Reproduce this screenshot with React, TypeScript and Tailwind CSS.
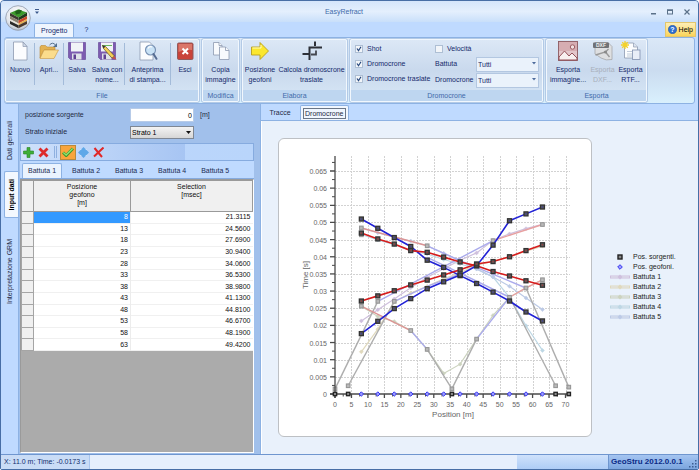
import { type ReactNode, useState } from "react";
import clsx from "clsx";

const READINGS = [
  { position: 8, msec: "21.3115" },
  { position: 13, msec: "24.5600" },
  { position: 18, msec: "27.6900" },
  { position: 23, msec: "30.9400" },
  { position: 28, msec: "34.0600" },
  { position: 33, msec: "36.5300" },
  { position: 38, msec: "38.9800" },
  { position: 43, msec: "41.1300" },
  { position: 48, msec: "44.8100" },
  { position: 53, msec: "46.6700" },
  { position: 58, msec: "48.1900" },
  { position: 63, msec: "49.4200" },
];

const SHOTS = ["Battuta 1", "Battuta 2", "Battuta 3", "Battuta 4", "Battuta 5"];

const GEOPHONES = READINGS.map((r) => r.position);
const SOURCES = [0, 4, 35.5, 67, 71];

type Point = [number, number];

// Times are in milliseconds
const withPositions = (times: number[], from = 0): Point[] =>
  times.map((t, i) => [GEOPHONES[from + i], t]);

const SHOT_SERIES: { color: string; points: Point[] }[] = [
  { color: "#cfc0dd", points: withPositions(READINGS.map((r) => parseFloat(r.msec))) },
  { color: "#e0d9bd", points: withPositions([12.3, 18.9, 26.8, 29.4, 31.4, 33.6, 35.4, 37.5, 38.7, 40, 41.6, 43.1]) },
  { color: "#ccd3bf", points: withPositions([25.6, 22.6, 21.1, 18.5, 13, 6, 8.7, 16, 22.9, 28.2, 30.9, 33.3]) },
  { color: "#bdd7e4", points: withPositions([46.5, 44.9, 43.5, 41.8, 40.8, 39.2, 37.9, 36.5, 34.1, 28.2, 19.9, 12.7]) },
  { color: "#bccae6", points: withPositions([48.4, 47, 45.7, 44.6, 43.2, 41, 38.8, 36.4, 34.1, 31.4, 28, 24.6]) },
];

const FADED_LINES: { color: string; points: Point[] }[] = [
  { color: "#adadad", points: [[0, 1.5], [13, 27]] },
  { color: "#adadad", points: [[4, 2.4], [18, 27]] },
  { color: "#adadad", points: [[28, 13], [35.5, 1.5], [43, 16]] },
  { color: "#adadad", points: [[53, 28.2], [67, 2.4]] },
  { color: "#adadad", points: [[58, 30.9], [71, 2]] },
  { color: "#ababec", points: [[13, 27], [48, 44.7]] },
  { color: "#ababec", points: [[18, 27], [28, 31.4], [38, 35]] },
  { color: "#ababec", points: [[23, 18.5], [28, 13]] },
  { color: "#ababec", points: [[43, 16], [53, 28.2]] },
  { color: "#ababec", points: [[28, 43.2], [38, 38.9], [58, 30.9]] },
  { color: "#ababec", points: [[28, 39.8], [38, 35.2], [53, 28.2]] },
  { color: "#dc9494", points: [[8, 48.4], [28, 43.2]] },
  { color: "#dc9494", points: [[8, 25.6], [23, 18.5]] },
  { color: "#e8a0a0", points: [[48, 44.7], [63, 49.4]] },
  { color: "#e8a0a0", points: [[53, 28.2], [58, 30.9], [63, 33.3]] },
];

const FADED_MARKS: Point[] = [
  [0, 1.5], [4, 2.4], [8, 25.6], [8, 48.4], [8, 46.4], [13, 27], [18, 27], [23, 18.5], [28, 43.2],
  [28, 13], [35.5, 1.5], [43, 16], [48, 44.7], [53, 28.2], [58, 30.9], [63, 33.3], [63, 49.4],
  [67, 2.4], [71, 2],
];

const MAIN_LINES: { color: string; points: Point[] }[] = [
  { color: "#2222d6", points: withPositions([51, 48.3, 45.6, 43, 39, 36.9, 34.5, 32.2, 29.7, 27.1, 23.9, 21.3]) },
  { color: "#2222d6", points: withPositions([17.6, 21.2, 24.9, 27.8, 30.7, 32.7, 34.7, 37.4, 43.4, 50.5, 52.5, 54.5]) },
  { color: "#d61c1c", points: withPositions([46.9, 45.2, 43.7, 41.8, 41.3, 39.9, 38.5, 37.4, 35.7, 34.4, 33, 31.7]) },
  { color: "#d61c1c", points: withPositions([27.1, 28.6, 30.1, 31.8, 33.2, 34.7, 36.2, 37.9, 38.6, 40, 41.8, 43.5]) },
];

const X0 = 56;
const Y0 = 255;
const TOP = 17;
const RIGHT = 291;
const px = (m: number) => X0 + (m * 230.5) / 70;
const py = (ms: number) => Y0 - (ms * 223) / 65;
const toPoints = (points: Point[]) => points.map(([m, t]) => `${px(m)},${py(t)}`).join(" ");

function Chart() {
  const xTicks = Array.from({ length: 15 }, (_, i) => i * 5);
  const yTicks = Array.from({ length: 14 }, (_, i) => i * 5);

  return (
    <svg
      viewBox="0 0 312 297"
      className="block w-full h-auto"
      role="img"
      aria-label="Dromocrone"
      fontFamily="'Liberation Sans', Arial, sans-serif"
      fontSize="7"
      fill="#666666"
    >
      <g stroke="#d2d2d2" strokeWidth="1" strokeDasharray="2 1">
        {xTicks.slice(1).map((m) => (
          <line key={m} x1={Math.round(px(m)) + 0.5} x2={Math.round(px(m)) + 0.5} y1={TOP} y2={Y0} />
        ))}
        {yTicks.slice(1).map((t) => (
          <line key={t} x1={X0} x2={RIGHT} y1={Math.round(py(t)) + 0.5} y2={Math.round(py(t)) + 0.5} />
        ))}
      </g>

      {SHOT_SERIES.map(({ color, points }) => (
        <g key={color} stroke={color} fill="none">
          <polyline points={toPoints(points)} strokeWidth="1.2" />
          {points.map(([m, t]) => (
            <path key={m} d={`M${px(m)} ${py(t) - 2}l2 2l-2 2l-2 -2z`} fill={color} strokeWidth="0.5" />
          ))}
        </g>
      ))}

      {FADED_LINES.map(({ color, points }, i) => (
        <polyline key={i} points={toPoints(points)} stroke={color} strokeWidth="1.4" fill="none" />
      ))}
      {FADED_MARKS.map(([m, t], i) => (
        <rect key={i} x={px(m) - 1.8} y={py(t) - 1.8} width="3.6" height="3.6" fill="#b9b9b9" stroke="#969696" strokeWidth="1.1" />
      ))}

      {MAIN_LINES.map(({ color, points }, i) => (
        <polyline key={i} points={toPoints(points)} stroke={color} strokeWidth="1.6" fill="none" />
      ))}
      {MAIN_LINES.map(({ color, points }, i) => (
        <g key={i}>
          {points.map(([m, t]) => (
            <g key={m}>
              <rect x={px(m) - 2} y={py(t) - 2} width="4" height="4" fill="#5c5c5c" stroke="#333" strokeWidth="1.3" />
              <rect x={px(m) - 0.7} y={py(t) - 0.7} width="1.4" height="1.4" fill={color} opacity="0.5" />
            </g>
          ))}
        </g>
      ))}

      <g stroke="#4a4a4a" strokeWidth="1.3">
        <line x1={X0} x2={X0} y1={TOP} y2={Y0 + 4} />
        <line x1={X0 - 5} x2={RIGHT} y1={Y0} y2={Y0} />
        {xTicks.map((m) => (
          <g key={m}>
            <line x1={px(m)} x2={px(m)} y1={Y0} y2={Y0 + 4} />
            {m < 70 && <line x1={px(m + 2.5)} x2={px(m + 2.5)} y1={Y0} y2={Y0 + 2.5} strokeWidth="1" />}
          </g>
        ))}
        {yTicks.map((t) => (
          <g key={t}>
            <line x1={X0 - 5} x2={X0} y1={py(t)} y2={py(t)} />
            <line x1={X0 - 3} x2={X0} y1={py(t + 2.5)} y2={py(t + 2.5)} strokeWidth="1" />
          </g>
        ))}
      </g>

      {SOURCES.map((m) => (
        <rect key={m} x={px(m) - 1.7} y={Y0 - 1.7} width="3.4" height="3.4" fill="#8a8a8a" stroke="#222" strokeWidth="1.3" />
      ))}
      {GEOPHONES.map((m) => (
        <path key={m} d={`M${px(m)} ${Y0 - 2.2}l2.2 2.2l-2.2 2.2l-2.2 -2.2z`} fill="#9a9aff" stroke="#3535ee" strokeWidth="1" />
      ))}

      {xTicks.map((m) => (
        <text key={m} x={px(m)} y={Y0 + 13} textAnchor="middle">{m}</text>
      ))}
      {yTicks.map((t) => (
        <text key={t} x={X0 - 8} y={py(t) + 3} textAnchor="end">{t / 1000}</text>
      ))}
      <text x="174" y={Y0 + 23} textAnchor="middle" fontSize="8">Position [m]</text>
      <text transform="translate(29 136) rotate(-90)" textAnchor="middle" fontSize="8">Time [s]</text>
    </svg>
  );
}

function Legend() {
  return (
    <ul className="text-[7px] leading-[10px] text-[#222]">
      <li className="flex items-center gap-[3px]">
        <svg width="20" height="8" viewBox="0 0 20 8">
          <rect x="8" y="2" width="4" height="4" fill="#888" stroke="#222" strokeWidth="1.4" />
        </svg>
        Pos. sorgenti.
      </li>
      <li className="flex items-center gap-[3px]">
        <svg width="20" height="8" viewBox="0 0 20 8">
          <path d="M10 1.7l2.3 2.3l-2.3 2.3l-2.3 -2.3z" fill="#9a9aff" stroke="#3535ee" />
        </svg>
        Pos. geofoni.
      </li>
      {SHOTS.map((shot, i) => (
        <li key={shot} className="flex items-center gap-[3px]">
          <svg width="20" height="8" viewBox="0 0 20 8">
            <rect x="0.5" y="3" width="19" height="2" fill="#e4e8f0" stroke={SHOT_SERIES[i].color} strokeWidth="1" />
            <path d="M10 1.5l2.5 2.5l-2.5 2.5l-2.5 -2.5z" fill={SHOT_SERIES[i].color} />
          </svg>
          {shot}
        </li>
      ))}
    </ul>
  );
}

function AppLogo() {
  return (
    <svg width="26" height="26" viewBox="0 0 26 26">
      <defs>
        <radialGradient id="orb" cx="0.5" cy="0.35" r="0.7">
          <stop offset="0" stopColor="#ffffff" />
          <stop offset="0.7" stopColor="#e2e6ec" />
          <stop offset="1" stopColor="#a3abb8" />
        </radialGradient>
      </defs>
      <circle cx="13" cy="13" r="12.3" fill="url(#orb)" stroke="#8f99ab" strokeWidth="0.8" />
      <path d="M5 8l8-3.500l9 3l-8.500 5z" fill="#3c9a2c" />
      <path d="M10 6.500l4-2l3 1l-2 3l-4 1z" fill="#1e5f1a" />
      <path d="M5 8l8.500 4.500v3L5 11z" fill="#39372f" />
      <path d="M22 7.500l-8.500 5v3L22 11z" fill="#1f3a1c" />
      <path d="M5 11l8.500 4.500v3L5 14z" fill="#8b8271" />
      <path d="M22 11l-8.500 4.500v3L22 14z" fill="#c8482a" />
      <path d="M5 14l8.500 4.500v1.800L5 16z" fill="#e7e2d8" />
      <path d="M22 14l-8.500 4.500v1.800L22 16z" fill="#e9b04a" />
      <path d="M5 16l8.500 4.300v3L5 19z" fill="#2b2a28" />
      <path d="M22 16l-8.500 4.300v3L22 19z" fill="#4b3a2e" />
    </svg>
  );
}

function NewIcon() {
  return (
    <svg width="20" height="20" viewBox="0 0 20 20">
      <path d="M3.500 1h9.500l4 4.500v13.500h-13.500z" fill="#fbfcfe" stroke="#8d99b0" strokeWidth="0.8" />
      <path d="M13 1v4.500h4z" fill="#d3dbe8" stroke="#8d99b0" strokeWidth="0.7" />
    </svg>
  );
}

function OpenIcon() {
  return (
    <svg width="20" height="20" viewBox="0 0 20 20">
      <path d="M1 17V6l1-1.500h4.500L8 6h8v3H5z" fill="#e3b252" stroke="#bd8a36" strokeWidth="0.6" />
      <path d="M1 17.500L5 9h14.500L15 17.500z" fill="#fbdc8c" stroke="#c9973f" strokeWidth="0.6" />
      <path d="M10.500 4q3-3.500 6 0" fill="none" stroke="#55718f" strokeWidth="1" />
      <path d="M18 2v4h-4z" fill="#55718f" />
    </svg>
  );
}

function SaveIcon({ edit = false }: { edit?: boolean }) {
  return (
    <svg width="20" height="20" viewBox="0 0 20 20">
      <path d="M1.500 1.500h17v17h-15l-2-2z" fill="#7d5bb0" stroke="#5f3f92" strokeWidth="0.6" />
      <rect x="4" y="1.500" width="12" height="9" fill="#f1f3f7" />
      <rect x="5" y="12.500" width="9.500" height="6" fill="#dfe2e8" />
      <rect x="6.500" y="13.500" width="2.500" height="4.500" fill="#5f3f92" />
      {edit && (
        <>
          <path d="M5 4.500h10" stroke="#67b55e" strokeWidth="1" />
          <path d="M5.500 4.500L8.500 5.500L17.500 15l-2.500 2.200L6.500 7.500z" fill="#f4cf55" stroke="#5c4a2c" strokeWidth="0.7" />
          <path d="M15 17.200l2.500-2.200l2 3.800z" fill="#c4524a" />
          <path d="M5.500 4.500l3 1l-2 2z" fill="#333" />
        </>
      )}
    </svg>
  );
}

function PreviewIcon() {
  return (
    <svg width="20" height="20" viewBox="0 0 20 20">
      <path d="M2 1h9.500l3.500 3.500v14.500H2z" fill="#fbfcfe" stroke="#8d99b0" strokeWidth="0.8" />
      <circle cx="12.500" cy="9" r="5" fill="#c9e2f6" stroke="#7a93b5" strokeWidth="1.200" />
      <path d="M10 7.500q1.500-2.500 4-1.500" stroke="#fff" strokeWidth="1.200" fill="none" />
      <path d="M15.500 13l3 4.800" stroke="#566c92" strokeWidth="2" strokeLinecap="round" />
    </svg>
  );
}

function ExitIcon() {
  return (
    <svg width="20" height="20" viewBox="0 0 20 20">
      <rect x="2.500" y="2" width="15.500" height="16.500" rx="1.200" fill="#c9433a" stroke="#8f5a5c" strokeWidth="1" />
      <path d="M3.500 3h13.500v6q-7-1-13.500 2z" fill="#df8478" opacity="0.8" />
      <path d="M7.500 7.500l5.500 5.500M13 7.500l-5.500 5.500" stroke="#fff" strokeWidth="2" />
    </svg>
  );
}

function CopyIcon() {
  return (
    <svg width="20" height="20" viewBox="0 0 20 20" fill="#f8fafd" stroke="#8d99b0" strokeWidth="0.8">
      <path d="M2.500 1.500h5.500l3 3v9.500h-8.500z" />
      <path d="M8 1.500v3h3" />
      <path d="M8.500 6h6l3.500 3.500v9h-9.500z" />
      <path d="M14.500 6v3.500h3.500" />
    </svg>
  );
}

function ArrowIcon() {
  return (
    <svg width="20" height="20" viewBox="0 0 20 20">
      <path d="M1.500 6h8.500V1.500l8.500 8.500L10 18.500V14H1.500z" fill="#fbe72e" stroke="#b99f1c" strokeWidth="0.9" />
      <path d="M2.500 7h8.500V4" fill="none" stroke="#fffbc0" strokeWidth="1" />
    </svg>
  );
}

function TranslateIcon() {
  return (
    <svg width="22" height="20" viewBox="0 0 22 20" fill="none" stroke="#2d3038" strokeWidth="2">
      <path d="M14 0.500v4.500" />
      <path d="M1.500 13h7.500M8.500 19V6.500h12.500" />
      <path d="M10 13.500h5V9.500" strokeWidth="1.800" stroke="#44474f" />
    </svg>
  );
}

function ImageIcon() {
  return (
    <svg width="20" height="20" viewBox="0 0 20 20">
      <rect x="0.500" y="0.500" width="19" height="19" fill="#e3c6ca" stroke="#8c5a60" strokeWidth="0.9" />
      <path d="M1 1h18v9H1z" fill="#d0a3a8" opacity="0.7" />
      <circle cx="14.500" cy="6" r="2.200" fill="#f1e0e1" stroke="#9c5d62" strokeWidth="1" />
      <path d="M1 16l5.500-6l4.500 5l3-3l5 5v2H1z" fill="#f8f0f0" stroke="#94525a" strokeWidth="1" />
    </svg>
  );
}

function DxfIcon() {
  return (
    <svg width="20" height="20" viewBox="0 0 20 20">
      <path d="M2 1.500h13l4 4v13q-6 1.500-11-1.500q-4-3-6-4z" fill="#dedfe1" stroke="#a4a6aa" strokeWidth="0.8" />
      <path d="M2.500 14l10-3l3-3M12.500 11l4 5" stroke="#999" strokeWidth="1.400" fill="none" />
      <circle cx="12.500" cy="11" r="1.600" fill="#8a8a8a" />
      <rect x="0" y="1.500" width="16" height="5.500" rx="1" fill="#707276" />
      <text x="8" y="6.200" fontSize="5" fontWeight="bold" textAnchor="middle" fill="#f0f0f0">DXF</text>
    </svg>
  );
}

function RtfIcon() {
  return (
    <svg width="20" height="20" viewBox="0 0 20 20">
      <path d="M3.500 2h9l4 4v11h-13z" fill="#fcfdfe" stroke="#8d99b0" strokeWidth="0.8" />
      <path d="M12.500 2v4h4" fill="#dde4ef" stroke="#8d99b0" strokeWidth="0.7" />
      <path d="M6 10.500h5M6 13h5M6 15h5" stroke="#b3bfd2" strokeWidth="0.8" />
      <path d="M4 0v8M0 4h8M1.200 1.200l5.600 5.600M6.800 1.200l-5.600 5.600" stroke="#f4d22c" strokeWidth="1.300" />
      <rect x="11.500" y="9" width="7.500" height="9.500" fill="#e9eef8" stroke="#7f8fae" strokeWidth="0.8" />
    </svg>
  );
}

function RibbonButton({
  icon,
  lines,
  className,
  disabled = false,
}: {
  icon: ReactNode;
  lines: string[];
  className: string;
  disabled?: boolean;
}) {
  return (
    <button
      type="button"
      disabled={disabled}
      className={clsx("flex shrink-0 flex-col items-center whitespace-nowrap", disabled && "text-[#a9b0bb]", className)}
    >
      {icon}
      <span className="mt-1 block">
        {lines.map((line) => (
          <span key={line} className="block">{line}</span>
        ))}
      </span>
    </button>
  );
}

function RibbonGroup({ title, className, children }: { title: string; className: string; children: ReactNode }) {
  return (
    <section
      className={clsx(
        "flex shrink-0 flex-col overflow-hidden rounded-[2px] border border-[#f1f7fd] bg-linear-to-b from-[#dce8f6] via-[#c9d9ed] to-[#d8e7f6] shadow-[0_0_0_1px_#b3cae6]",
        className,
      )}
    >
      <div className="flex flex-1 pt-px">{children}</div>
      <h2 className="h-[11px] bg-[#bed6f0] text-center leading-[11px] text-[#3e6aaa]">{title}</h2>
    </section>
  );
}

const Divider = () => <div className="mt-[2px] h-[42px] w-px shrink-0 bg-[#a3bbd9]" />;

function RibbonCheck({ label, initial }: { label: string; initial: boolean }) {
  const [checked, setChecked] = useState(initial);
  return (
    <label className="flex h-[15px] items-center gap-1 whitespace-nowrap">
      <span className="relative block size-2">
        <input
          type="checkbox"
          checked={checked}
          onChange={(e) => setChecked(e.target.checked)}
          className="block size-2 appearance-none border border-[#aebfd4] bg-[#f2f5f9]"
        />
        {checked && (
          <svg viewBox="0 0 8 8" className="pointer-events-none absolute inset-0 size-2">
            <path d="M2 3.500l1.500 2.200l2.500-4" fill="none" stroke="#26477c" strokeWidth="1.200" />
          </svg>
        )}
      </span>
      {label}
    </label>
  );
}

function RibbonSelect({ id, label }: { id: string; label: string }) {
  return (
    <div className="flex h-4 items-center">
      <label htmlFor={id} className="w-[41px]">{label}</label>
      <div className="relative">
        <select
          id={id}
          className="block h-[15px] w-[63px] appearance-none border border-[#b3c7e1] bg-[#eaf2fb] pl-px leading-[13px] text-[#15296b]"
        >
          <option>Tutti</option>
        </select>
        <svg viewBox="0 0 4 3" className="pointer-events-none absolute right-[3px] top-[5px] h-[3px] w-1">
          <path d="M0 0h4l-2 2.500z" fill="#4d6b9c" />
        </svg>
      </div>
    </div>
  );
}

function TitleBar() {
  return (
    <header className="flex h-[21px] items-center bg-linear-to-b from-[#d4e5fb] via-[#e4effd] to-[#c9dffa]">
      <div className="w-[34px]" />
      <svg width="4" height="6" viewBox="0 0 4 6" fill="#3d5b8e">
        <path d="M0 0h4v1h-4zM0 2.500h4l-2 2.500z" />
      </svg>
      <h1 className="flex-1 pr-[2px] text-center text-[7px] text-[#3e6aaa]">EasyRefract</h1>
      <div className="flex items-center gap-[11px] pr-2 text-[#5b7189]">
        <button type="button" aria-label="Minimize">
          <svg width="5" height="6" viewBox="0 0 5 6"><path d="M0 4h5v1.500h-5z" fill="currentColor" /></svg>
        </button>
        <button type="button" aria-label="Maximize">
          <svg width="6" height="6" viewBox="0 0 6 6">
            <rect x="0.500" y="1" width="5" height="4" fill="none" stroke="currentColor" />
            <path d="M0 0.500h6v1.500h-6z" fill="currentColor" />
          </svg>
        </button>
        <button type="button" aria-label="Close">
          <svg width="6" height="6" viewBox="0 0 6 6"><path d="M0.500 0.500l5 5M5.500 0.500l-5 5" stroke="currentColor" strokeWidth="1.200" /></svg>
        </button>
      </div>
    </header>
  );
}

function Ribbon() {
  return (
    <div className="mx-[3px] flex h-[67px] gap-[3px] rounded-[3px] border border-[#8db2e3] bg-linear-to-b from-[#dbe8f7] via-[#cbdcf0] to-[#d9f0fd] py-px leading-[10px]">
      <RibbonGroup title="File" className="w-[194px]">
        <RibbonButton className="w-7" icon={<NewIcon />} lines={["Nuovo"]} />
        <Divider />
        <RibbonButton className="w-7" icon={<OpenIcon />} lines={["Apri..."]} />
        <Divider />
        <RibbonButton className="w-[26px]" icon={<SaveIcon />} lines={["Salva"]} />
        <RibbonButton className="w-[34px]" icon={<SaveIcon edit />} lines={["Salva con", "nome..."]} />
        <Divider />
        <RibbonButton className="w-[45px]" icon={<PreviewIcon />} lines={["Anteprima", "di stampa..."]} />
        <Divider />
        <RibbonButton className="w-7" icon={<ExitIcon />} lines={["Esci"]} />
      </RibbonGroup>
      <RibbonGroup title="Modifica" className="w-[37px]">
        <RibbonButton className="w-[35px]" icon={<CopyIcon />} lines={["Copia", "immagine"]} />
      </RibbonGroup>
      <RibbonGroup title="Elabora" className="w-[105px]">
        <RibbonButton className="w-[34px]" icon={<ArrowIcon />} lines={["Posizione", "geofoni"]} />
        <RibbonButton className="w-[69px]" icon={<TranslateIcon />} lines={["Calcola dromoscrone", "traslate"]} />
      </RibbonGroup>
      <RibbonGroup title="Dromocrone" className="w-[193px]">
        <div className="w-[81px] pl-1">
          <RibbonCheck label="Shot" initial />
          <RibbonCheck label="Dromocrone" initial />
          <RibbonCheck label="Dromocrone traslate" initial />
        </div>
        <div className="pl-[3px]">
          <RibbonCheck label="Velocità" initial={false} />
          <RibbonSelect id="battuta" label="Battuta" />
          <RibbonSelect id="dromocrone" label="Dromocrone" />
        </div>
      </RibbonGroup>
      <RibbonGroup title="Esporta" className="w-[101px]">
        <RibbonButton className="w-[42px]" icon={<ImageIcon />} lines={["Esporta", "immagine..."]} />
        <RibbonButton className="w-[27px]" icon={<DxfIcon />} lines={["Esporta", "DXF..."]} disabled />
        <RibbonButton className="w-[29px]" icon={<RtfIcon />} lines={["Esporta", "RTF..."]} />
      </RibbonGroup>
    </div>
  );
}

function SideTabs() {
  const tab = "w-full [writing-mode:vertical-rl] rotate-180 flex items-center justify-center whitespace-nowrap";
  return (
    <nav className="flex w-[18px] shrink-0 flex-col border-r border-[#8db2e3] bg-[#bfdaff] pt-[5px]">
      <button type="button" className={clsx(tab, "h-[62px]")}>Dati generali</button>
      <button
        type="button"
        className="ml-[3px] flex h-[47px] items-center justify-center rounded-l-[2px] border border-r-0 border-[#8db2e3] bg-[#f3f8fe] font-bold text-black"
      >
        <span className="rotate-180 [writing-mode:vertical-rl] whitespace-nowrap">Input dati</span>
      </button>
      <button type="button" className={clsx(tab, "h-[108px]")}>Interpretazione GRM</button>
    </nav>
  );
}

function GridToolbar() {
  const tool = "flex size-[15px] items-center justify-center";
  return (
    <div className="flex h-[18px] items-center border border-[#86abdf] bg-linear-to-r from-[#bdd7fb] to-[#b9d5fb]">
      <div className="flex h-full w-[164px] items-center bg-linear-to-r from-[#cfe1fb] to-[#a7c5f3]">
        <button type="button" aria-label="Add" className={tool}>
          <svg width="11" height="11" viewBox="0 0 11 11"><path d="M4 0.500h3V4h3.500v3H7v3.500H4V7H0.500V4H4z" fill="#3fae38" stroke="#2b8427" strokeWidth="0.6" /></svg>
        </button>
        <button type="button" aria-label="Delete" className={tool}>
          <svg width="11" height="11" viewBox="0 0 11 11"><path d="M1.500 1.500l8 8M9.500 1.500l-8 8" stroke="#dd2b2b" strokeWidth="2.800" /></svg>
        </button>
        <div className="mx-[3px] h-3 w-[3px] border-x border-[#8fb0df]" />
        <button type="button" aria-label="Confirm" className="flex h-[15px] w-4 items-center justify-center border border-[#b98a3c] bg-[#f9a53c]">
          <svg width="12" height="10" viewBox="0 0 12 10"><path d="M1 5.500l3.200 3L11 1.500" fill="none" stroke="#3c9a2c" strokeWidth="3" /><path d="M1.300 5.500l2.900 2.500L10.700 1.500" fill="none" stroke="#8fe070" strokeWidth="1.300" /></svg>
        </button>
        <button type="button" aria-label="Move" className={tool}>
          <svg width="11" height="11" viewBox="0 0 11 11">
            <path d="M5.500 0L8 2.500v0.500h0.500L11 5.500L8.500 8H8v0.500L5.500 11L3 8.500V8h-0.500L0 5.500L2.500 3H3v-0.500z" fill="#5fa8e8" />
            <path d="M2.500 2.500h0.500v0.500M8 3v-0.500h0.500M3 8v0.500h-0.500M8.500 8.500H8V8" stroke="#d3e5fa" strokeWidth="1" fill="none" />
          </svg>
        </button>
        <button type="button" aria-label="Clear" className={tool}>
          <svg width="11" height="11" viewBox="0 0 11 11"><path d="M1.500 1l7.500 9M10.500 0.500L1 9.500" stroke="#e02828" strokeWidth="2" /></svg>
        </button>
      </div>
    </div>
  );
}

function ReadingsTable() {
  return (
    <table className="h-[171px] w-full table-fixed border-collapse bg-white text-[7px] leading-[8px] text-[#111]">
      <colgroup>
        <col className="w-3" />
        <col className="w-[97px]" />
        <col />
      </colgroup>
      <thead>
        <tr className="h-[31px] bg-[#f0f0f0] align-top">
          <td className="border border-[#9a9a9a]" />
          <th className="border border-[#9a9a9a] p-0 pt-[2px] font-normal">
            Posizione<br />geofono<br />[m]
          </th>
          <th className="border border-[#9a9a9a] p-0 pt-[2px] font-normal">
            Selection<br />[msec]
          </th>
        </tr>
      </thead>
      <tbody>
        {READINGS.map((row, i) => (
          <tr key={row.position} className="border-b border-[#f0f0f0]">
            <th className="border border-[#a5a5a5] bg-[#f0f0f0] p-0" />
            <td className={clsx("border-r border-[#ececec] p-0 pr-[2px] text-right", i === 0 && "bg-[#3399ff] text-white")}>
              {row.position}
            </td>
            <td className="p-0 pr-[2px] text-right">{row.msec}</td>
          </tr>
        ))}
      </tbody>
    </table>
  );
}

function InputPanel() {
  const [shot, setShot] = useState(SHOTS[0]);
  return (
    <section className="flex w-[238px] shrink-0 flex-col bg-[#a1c0eb] pl-px pr-[3px] pt-1">
      <div className="flex h-[14px] items-center pl-[5px]">
        <label htmlFor="source" className="w-[105px]">posizione sorgente</label>
        <input id="source" defaultValue="0" className="h-[14px] w-[64px] border border-[#b7cbe8] bg-white pr-px text-right text-black" />
        <span className="pl-[6px]">[m]</span>
      </div>
      <div className="mt-[3px] flex h-[14px] items-center pl-[5px]">
        <label htmlFor="layer" className="w-[105px]">Strato iniziale</label>
        <div className="relative">
          <select
            id="layer"
            className="block h-[13px] w-[64px] appearance-none border border-[#7f8793] bg-linear-to-b from-[#f4f4f4] to-[#d6d6d6] pl-px leading-[11px] text-black"
          >
            <option>Strato 1</option>
          </select>
          <svg viewBox="0 0 5 3" className="pointer-events-none absolute right-[3px] top-[5px] h-[3px] w-[5px]">
            <path d="M0 0h5l-2.500 3z" fill="#111" />
          </svg>
        </div>
      </div>
      <div className="mt-1">
        <GridToolbar />
      </div>
      <div role="tablist" className="flex h-[18px] items-end border-b border-[#86abdf] bg-[#bfdaff] pl-[2px] text-[#1b2b52]">
        {SHOTS.map((name) => (
          <button
            key={name}
            type="button"
            role="tab"
            aria-selected={name === shot}
            onClick={() => setShot(name)}
            className={clsx(
              "mr-[5px] h-[15px] px-[5px]",
              name === shot && "rounded-t-[2px] border border-b-0 border-[#8db2e3] bg-[#eaf3fe]",
            )}
          >
            {name}
          </button>
        ))}
      </div>
      <div className="mb-px flex-1 border border-[#9a9a9a] border-r-white border-b-white bg-[#ababab]">
        <ReadingsTable />
      </div>
    </section>
  );
}

function ChartPanel() {
  return (
    <section className="ml-[3px] flex min-w-0 flex-1 flex-col border-l border-[#8db2e3]">
      <div role="tablist" className="flex h-[17px] shrink-0 items-end border-b border-[#8db2e3] bg-[#bfdaff] pl-1">
        <button type="button" role="tab" aria-selected={false} className="h-[15px] w-[30px]">Tracce</button>
        <button
          type="button"
          role="tab"
          aria-selected
          className="ml-[5px] flex h-[15px] items-center rounded-t-[2px] border border-b-0 border-[#8db2e3] bg-[#f0f6fe] px-[2px]"
        >
          <span className="border border-[#6b7686] px-px leading-[9px]">Dromocrone</span>
        </button>
      </div>
      <div className="flex flex-1 items-start border-l border-white bg-[#e9f1fb] pl-4 pt-[17px]">
        <div className="min-w-0 flex-1 rounded-[6px] border border-[#bdc0c4] bg-white">
          <Chart />
        </div>
        <div className="w-[106px] shrink-0 pl-[18px] pt-[114px]">
          <Legend />
        </div>
      </div>
    </section>
  );
}

function StatusBar() {
  return (
    <footer className="flex h-[15px] shrink-0 items-center border-t border-[#6f96cf] bg-[#e6effc] text-[#12306e]">
      <span className="flex h-full items-center border-r border-[#a9c6ee] bg-[#c9dcf6] px-[3px] whitespace-nowrap">
        X: 11.0 m; Time: -0.0173 s
      </span>
      <div className="flex-1" />
      <div className="h-full w-[91px] bg-linear-to-b from-[#cfe2fb] to-[#aecdf6]" />
      <div className="flex h-full w-[90px] items-center justify-between border-l border-[#6f96cf] bg-linear-to-b from-[#a5c5f1] to-[#7ba5de] pl-[2px] text-[8px] font-bold whitespace-nowrap text-[#0a2a86]">
        GeoStru 2012.0.0.1
        <svg width="8" height="8" viewBox="0 0 8 8" fill="#3f5f92" className="mt-1 mr-px">
          <path d="M6 0h1.500v1.500H6zM6 3h1.500v1.500H6zM6 6h1.500v1.500H6zM3 3h1.500v1.500H3zM3 6h1.500v1.500H3zM0 6h1.500v1.500H0z" />
        </svg>
      </div>
    </footer>
  );
}

export default function App() {
  return (
    <div className="relative flex min-h-screen flex-col overflow-hidden rounded-t-[4px] rounded-b-[2px] border border-[#476ea6] bg-[#bfdaff] font-['Liberation_Sans',Arial,sans-serif] text-[7px] leading-[10px] text-[#15296b]">
      <TitleBar />
      <div className="absolute left-1 top-1">
        <AppLogo />
      </div>
      <div className="flex h-[15px] items-end pl-[33px] pr-[2px]">
        <button type="button" className="h-[14px] rounded-t-[2px] border border-b-0 border-[#8db2e3] bg-[#eef5fe] px-[6px]">Progetto</button>
        <button type="button" className="h-[14px] px-[10px]">?</button>
        <a
          href="#help"
          className="ml-auto flex h-[15px] items-center gap-[2px] border border-[#e3c66d] bg-linear-to-b from-[#fdeeb5] to-[#fbd457] px-[2px] text-black"
        >
          <svg width="9" height="9" viewBox="0 0 9 9">
            <circle cx="4.500" cy="4.500" r="4.200" fill="#2f6fd0" stroke="#1f4fa0" strokeWidth="0.5" />
            <text x="4.500" y="7" textAnchor="middle" fontSize="7" fontWeight="bold" fill="#fff">?</text>
          </svg>
          Help
        </a>
      </div>
      <Ribbon />
      <main className="flex flex-1 bg-[#a1c0eb] text-[#1f2a44]">
        <SideTabs />
        <InputPanel />
        <ChartPanel />
      </main>
      <StatusBar />
    </div>
  );
}
